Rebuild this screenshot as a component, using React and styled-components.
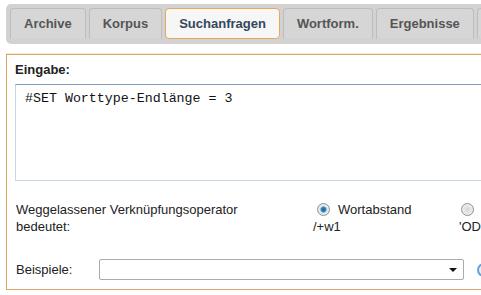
import styled, { createGlobalStyle } from "styled-components";

const GlobalStyle = createGlobalStyle`
  html, body {
    margin: 0;
    padding: 0;
    background: #ffffff;
    overflow: hidden;
  }
  body {
    font-family: "Liberation Sans", Arial, sans-serif;
    color: #222222;
  }
`;

const Page = styled.div`
  width: 560px;
  padding: 4px 0 0 6px;
`;

const TabBar = styled.div`
  display: flex;
  gap: 3px;
  height: 40px;
  box-sizing: border-box;
  padding: 4px 0 0 4px;
  background: #d2d2d2;
  border-radius: 5px 0 0 5px;
`;

const Tab = styled.div`
  box-sizing: border-box;
  height: 31px;
  min-width: 40px;
  padding: 0 13px;
  display: flex;
  align-items: center;
  font-size: 13px;
  font-weight: bold;
  white-space: nowrap;
  color: ${(p) => (p.$active ? "#34475a" : "#555555")};
  background: ${(p) => (p.$active ? "#f6f6f6" : "#d6d6d6")};
  border: 1px solid ${(p) => (p.$active ? "#e8a75c" : "#bdbdbd")};
  border-bottom-color: ${(p) => (p.$active ? "#e8a75c" : "#d2d2d2")};
  border-radius: ${(p) => (p.$active ? "4px" : "4px 4px 0 0")};
`;

const Panel = styled.div`
  margin-top: 10px;
  box-sizing: border-box;
  padding: 7px 0 9px 8px;
  background: #ffffff;
  border: 1px solid #dca45e;
  border-right: none;
  box-shadow: 0 -1px 0 #f8ecd2;
`;

const Heading = styled.div`
  font-size: 13px;
  font-weight: bold;
  line-height: 16px;
  color: #222222;
`;

const Input = styled.textarea`
  display: block;
  box-sizing: border-box;
  width: 540px;
  height: 97px;
  margin-top: 6px;
  padding: 6px 9px;
  resize: none;
  outline: none;
  font-family: "Liberation Mono", "Courier New", monospace;
  font-size: 13.3px;
  line-height: 15px;
  color: #111111;
  border: 1px solid #c6d7e4;
  border-top-color: #7f9db9;
`;

const OptionGrid = styled.div`
  display: grid;
  grid-template-columns: 298px 146px 146px;
  margin-top: 20px;
  font-size: 13px;
  line-height: 17px;
`;

const Label = styled.div`
  padding-left: 1px;
`;

const Option = styled.div`
  display: flex;
  flex-direction: column;
`;

const RadioLine = styled.div`
  display: flex;
  align-items: center;
  gap: 8px;
  height: 17px;
  padding-left: ${(p) => p.$indent || 4}px;
`;

const Radio = styled.span`
  display: inline-block;
  box-sizing: border-box;
  width: 13px;
  height: 13px;
  border-radius: 50%;
  border: 1px solid #8e8f8f;
  background: ${(p) =>
    p.$checked
      ? "radial-gradient(circle, #1b5f8e 0, #3c8cc4 2.5px, #dfe6ea 3.5px, #f3f3f3 100%)"
      : "radial-gradient(circle, #d6d6d6 0, #e4e4e4 3px, #f6f6f6 100%)"};
`;

const ExampleRow = styled.div`
  display: flex;
  align-items: center;
  margin-top: 24px;
  font-size: 13px;
`;

const ExampleLabel = styled.div`
  width: 83px;
  padding-left: 1px;
`;

const Select = styled.div`
  position: relative;
  box-sizing: border-box;
  width: 365px;
  height: 21px;
  border: 1px solid #ababab;
  border-radius: 2px;
  background: #ffffff;

  &::after {
    content: "";
    position: absolute;
    right: 6px;
    top: 8px;
    border-left: 4px solid transparent;
    border-right: 4px solid transparent;
    border-top: 4px solid #111111;
  }
`;

const HelpIcon = styled.span`
  display: inline-block;
  box-sizing: border-box;
  width: 14px;
  height: 14px;
  margin-left: 13px;
  border-radius: 50%;
  border: 2px solid #6aa0d8;
  background: #e6f0fa;
`;

const tabs = ["Archive", "Korpus", "Suchanfragen", "Wortform.", "Ergebnisse", ""];

const App = () => {
  return (
    <Page>
      <GlobalStyle />
      <TabBar>
        {tabs.map((t, i) => (
          <Tab key={i} $active={t === "Suchanfragen"}>
            {t}
          </Tab>
        ))}
      </TabBar>
      <Panel>
        <Heading>Eingabe:</Heading>
        <Input defaultValue="#SET Worttype-Endlänge = 3" />
        <OptionGrid>
          <Label>
            Weggelassener Verknüpfungsoperator
            <br />
            bedeutet:
          </Label>
          <Option>
            <RadioLine>
              <Radio $checked />
              Wortabstand
            </RadioLine>
            <span>/+w1</span>
          </Option>
          <Option>
            <RadioLine $indent={2}>
              <Radio />
            </RadioLine>
            <span>'ODE</span>
          </Option>
        </OptionGrid>
        <ExampleRow>
          <ExampleLabel>Beispiele:</ExampleLabel>
          <Select />
          <HelpIcon />
        </ExampleRow>
      </Panel>
    </Page>
  );
};

export default App;
